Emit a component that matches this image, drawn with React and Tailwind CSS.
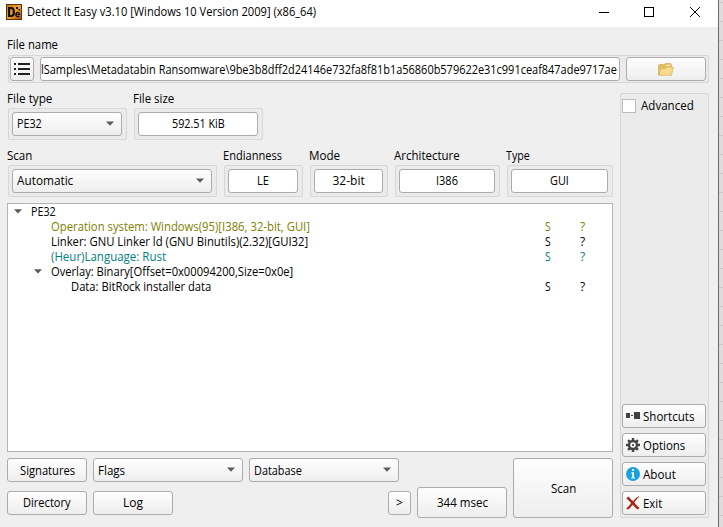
import { useLayoutEffect, useRef, useState } from "react";

// Text condensed to a fixed advance width.
function T({ w, children }) {
  const ref = useRef(null);
  const [scale, setScale] = useState(1);
  useLayoutEffect(() => {
    setScale(w / ref.current.offsetWidth);
  }, [w, children]);
  return (
    <span className="block h-[15px] shrink-0 text-left" style={{ width: w + "px" }}>
      <span ref={ref} className="inline-block origin-left whitespace-pre align-top" style={{ transform: `scaleX(${scale})` }}>
        {children}
      </span>
    </span>
  );
}

const BTN = "flex shrink-0 items-center rounded-[3px] border border-[#acacac] bg-linear-to-b from-[#fefefe] to-[#eeeeee]";
const FRAME = "flex rounded-[2px] border border-[#d7d7d7] bg-[#ebebeb]";

function Button({ className = "", children }) {
  return <button className={BTN + " justify-center " + className}>{children}</button>;
}

function Combo({ className = "", children }) {
  return (
    <div className={BTN + " h-[24px] justify-between pl-[4px] pr-[7px] " + className}>
      {children}
      <svg width="8" height="5" viewBox="0 0 8 5" className="mb-px">
        <path d="M0 0.5H8L4 4.8Z" fill="#5b5b5b" />
      </svg>
    </div>
  );
}

function Field({ label, lw, text, tw, className = "" }) {
  return (
    <div className={className}>
      <div className="flex h-[17px] items-start"><T w={lw}>{label}</T></div>
      <div className={FRAME + " ml-px h-[32px] p-[3px] pr-[4px]"}>
        <div className="flex h-[24px] w-full items-center justify-center rounded-[3px] border border-[#acacac] bg-white pb-px">
          <T w={tw}>{text}</T>
        </div>
      </div>
    </div>
  );
}

function ComboField({ label, lw, text, tw, className = "" }) {
  return (
    <div className={className}>
      <div className="flex h-[17px] items-start"><T w={lw}>{label}</T></div>
      <div className={FRAME + " ml-px h-[32px] p-[3px] pr-[4px]"}>
        <Combo className="w-full pb-px"><T w={tw}>{text}</T></Combo>
      </div>
    </div>
  );
}

function Row({ pad, arrow, color = "text-black", w, flags, children }) {
  return (
    <div className={"flex h-[15px] items-center " + pad + " " + color}>
      <span className="w-[17px] shrink-0">
        {arrow && (
          <svg width="8" height="5" viewBox="0 0 8 5"><path d="M0 0.3H8L4 4.6Z" fill="#5b5b5b" /></svg>
        )}
      </span>
      <T w={w}>{children}</T>
      {flags && (
        <span className="ml-auto flex pr-[25px]">
          <span className="w-[35px]"><T w={6}>S</T></span>
          <span className="w-[7px]"><T w={5}>?</T></span>
        </span>
      )}
    </div>
  );
}

function SideButton({ icon, label, w }) {
  return (
    <button className={BTN + " h-[24px] w-[84px] pl-[3px]"}>
      <span className="flex w-[17px] shrink-0">{icon}</span>
      <T w={w}>{label}</T>
    </button>
  );
}

const shortcutsIcon = (
  <svg width="15" height="14" viewBox="0 0 15 14" fill="#414141" shapeRendering="crispEdges">
    <path d="M0 4h4v5H0zM5 6h2v1H5zM8 3h6v7H8z" />
  </svg>
);
const teeth = [0, 45, 90, 135, 180, 225, 270, 315];
const optionsIcon = (
  <svg width="14" height="14" viewBox="0 0 14 14">
    <circle cx="7" cy="7" r="4" fill="none" stroke="#444" strokeWidth="2.4" />
    {teeth.map((a) => (
      <rect key={a} x="5.8" y="0" width="2.4" height="2.6" fill="#444" transform={`rotate(${a} 7 7)`} />
    ))}
    <circle cx="7" cy="7" r="1.1" fill="#444" />
  </svg>
);
const aboutIcon = (
  <svg width="14" height="14" viewBox="0 0 14 14">
    <circle cx="7" cy="7" r="7" fill="#1ba1e2" />
    <path d="M6 2h2v2H6zM5.3 5.2H8v5.2h1v1.2H5.2v-1.2h1V6.4h-.9z" fill="#fff" />
  </svg>
);
const exitIcon = (
  <svg width="14" height="14" viewBox="0 0 14 14">
    <path d="M0.3 2.2 2.5 0.5C4 2.3 5.4 3.9 7 5.2 8.8 3.2 10.6 1.4 12.8 0.3L13.2 .8C11.2 2.5 9.6 4.4 8.3 6.5 9.8 8.4 11.8 10.5 13.6 12L11.6 13.5C9.8 12 8 10.2 6.7 8.7 5 10.8 3.6 12.4 2.2 13.6L.2 12.7C2 11 3.8 8.9 5.1 7 3.5 5.2 1.8 3.5.3 2.2Z" fill="#a52714" />
  </svg>
);

const gridLines = Array.from({ length: 28 }, (_, i) => i);

export default function App() {
  return (
    <div className="flex h-[527px] w-[723px] overflow-hidden bg-[#efefef] font-['Open_Sans','Noto_Sans',sans-serif] text-[12px] leading-[15px] text-black">
      <div className="flex w-[718px] shrink-0 flex-col">
        <header className="flex h-[27px] shrink-0 items-center bg-white pb-[4px] pl-[6px]">
          <svg width="16" height="16" viewBox="0 0 16 16">
            <defs>
              <linearGradient id="logo" x1="0" y1="0" x2="1" y2="1">
                <stop offset="0" stopColor="#c9781c" /><stop offset="0.5" stopColor="#f2a431" /><stop offset="1" stopColor="#a94f0c" />
              </linearGradient>
            </defs>
            <rect width="16" height="16" fill="#5a300c" />
            <rect x="1" y="1" width="14" height="14" fill="url(#logo)" />
            <path d="M2 3h3.2C8 3 9 5 9 8s-1 5-3.8 5H2zM4.2 5v6h.7c1.3 0 1.8-.9 1.8-3s-.5-3-1.8-3z" fill="#111" fillRule="evenodd" />
            <path d="M13.8 12.5c-.5.6-1.2.8-2 .8-1.700 0-2.600-1-2.600-2.700S10.200 7.700 11.700 7.700s2.400 1 2.300 3.200h-3.200c.1.800.5 1.100 1.200 1.100.500 0 .900-.1 1.400-.4zM10.800 10h1.700c0-.7-.3-1-.8-1s-.8.300-.9 1z" fill="#111" fillRule="evenodd" />
            <rect x="10" y="3" width="2" height="2" fill="#111" />
            <rect x="12.500" y="5" width="1.500" height="1.500" fill="#111" />
          </svg>
          <div className="ml-[5px] flex-1"><T w={289}>Detect It Easy v3.10 [Windows 10 Version 2009] (x86_64)</T></div>
          <svg width="102" height="12" viewBox="0 0 102 12" className="mr-[17px]" stroke="#000" fill="none">
            <path d="M0 6.500h10" />
            <rect x="45.500" y="1.500" width="9" height="9" />
            <path d="M91 1l10 10M101 1L91 11" />
          </svg>
        </header>

        <div className="mt-[10px] flex h-[17px] shrink-0 items-start pl-[7px]"><T w={51}>File name</T></div>
        <div className={FRAME + " ml-[8px] mt-px h-[28px] w-[701px] shrink-0 items-center px-px"}>
          <Button className="h-[24px] w-[24px]">
            <svg width="16" height="13" viewBox="0 0 16 13" fill="#222">
              <path d="M0 0h2v2H0zM0 5h2v2H0zM0 10h2v2H0zM4 0h12v2H4zM4 5h12v2H4zM4 10h12v2H4z" />
            </svg>
          </Button>
          <div className="ml-[6px] flex h-[24px] w-[580px] items-center overflow-hidden rounded-[3px] border border-[#acacac] bg-white">
            <T w={576}>{"lSamples\\Metadatabin Ransomware\\9be3b8dff2d24146e732fa8f81b1a56860b579622e31c991ceaf847ade9717ae"}</T>
          </div>
          <Button className="ml-[6px] h-[24px] w-[80px]">
            <svg width="16" height="13" viewBox="0 0 16 13">
              <path d="M0.500 12V2.500L1.500 1.500H6L7.500 0.500H12.500L13.500 1.500V11z" fill="#e3bd61" stroke="#c9a24a" strokeWidth=".6" />
              <path d="M8 1.800h4.500v1H8z" fill="#fff4cf" />
              <path d="M1 12.300 2.500 5.500H7L8.500 4H15.500L13.500 12.300z" fill="#f7d98c" stroke="#d4ac52" strokeWidth=".6" />
            </svg>
          </Button>
        </div>

        <div className="flex min-h-0 flex-1">
          <main className="ml-[7px] w-[606px] shrink-0">
            <div className="mt-[8px] flex">
              <ComboField label="File type" lw={45} text="PE32" tw={25} className="w-[120px]" />
              <Field label="File size" lw={41} text="592.51 KiB" tw={53} className="ml-[6px] w-[130px]" />
            </div>
            <div className="mt-[8px] flex gap-[6px]">
              <ComboField label="Scan" lw={25} text="Automatic" tw={56} className="w-[210px]" />
              <Field label="Endianness" lw={59} text="LE" tw={12} className="w-[80px]" />
              <Field label="Mode" lw={31} text="32-bit" tw={32} className="w-[79px]" />
              <Field label="Architecture" lw={66} text="I386" tw={22} className="w-[106px]" />
              <Field label="Type" lw={24} text="GUI" tw={19} className="w-[107px]" />
            </div>

            <div className="mt-[6px] h-[249px] border border-[#b4b4b4] bg-white">
              <Row pad="pl-[6px]" arrow w={25}>PE32</Row>
              <Row pad="pl-[26px]" color="text-[#808000]" w={259} flags>Operation system: Windows(95)[I386, 32-bit, GUI]</Row>
              <Row pad="pl-[26px]" w={257} flags>Linker: GNU Linker ld (GNU Binutils)(2.32)[GUI32]</Row>
              <Row pad="pl-[26px]" color="text-[#008080]" w={115} flags>(Heur)Language: Rust</Row>
              <Row pad="pl-[26px]" arrow w={242}>Overlay: Binary[Offset=0x00094200,Size=0x0e]</Row>
              <Row pad="pl-[46px]" w={140} flags>Data: BitRock installer data</Row>
            </div>

            <div className="mt-[6px] flex gap-[6px]">
              <div className="flex w-[500px] flex-col">
                <div className="flex gap-[6px]">
                  <Button className="h-[24px] w-[80px]"><T w={55}>Signatures</T></Button>
                  <Combo className="w-[150px]"><T w={27}>Flags</T></Combo>
                  <Combo className="w-[150px]"><T w={48}>Database</T></Combo>
                </div>
                <div className="mt-[5px] flex h-[31px] items-center gap-[6px]">
                  <Button className="h-[24px] w-[80px]"><T w={48}>Directory</T></Button>
                  <Button className="h-[24px] w-[80px]"><T w={20}>Log</T></Button>
                  <Button className="ml-auto h-[24px] w-[23px]"><T w={7}>&gt;</T></Button>
                  <Button className="h-[31px] w-[90px]"><T w={51}>344 msec</T></Button>
                </div>
              </div>
              <Button className="h-[60px] w-[100px]"><T w={25}>Scan</T></Button>
            </div>
          </main>

          <aside className={FRAME + " ml-[7px] mt-[10px] h-[425px] w-[89px] flex-col p-px pb-[2px]"}>
            <label className="mt-[3px] flex items-center">
              <span className="size-[14px] border border-[#bcbcbc] bg-white" />
              <span className="ml-[5px]"><T w={53}>Advanced</T></span>
            </label>
            <div className="mt-auto flex flex-col gap-[5px]">
              <SideButton icon={shortcutsIcon} label="Shortcuts" w={51} />
              <SideButton icon={optionsIcon} label="Options" w={42} />
              <SideButton icon={aboutIcon} label="About" w={33} />
              <SideButton icon={exitIcon} label="Exit" w={19} />
            </div>
          </aside>
        </div>
      </div>
      <div className="flex flex-1 flex-col border-l border-[#6c6c6c] bg-[#dddbdb] pt-[2px]">
        {gridLines.map((i) => (
          <div key={i} className="h-[19px] shrink-0 border-t border-[#c9c7c7]" />
        ))}
      </div>
    </div>
  );
}
